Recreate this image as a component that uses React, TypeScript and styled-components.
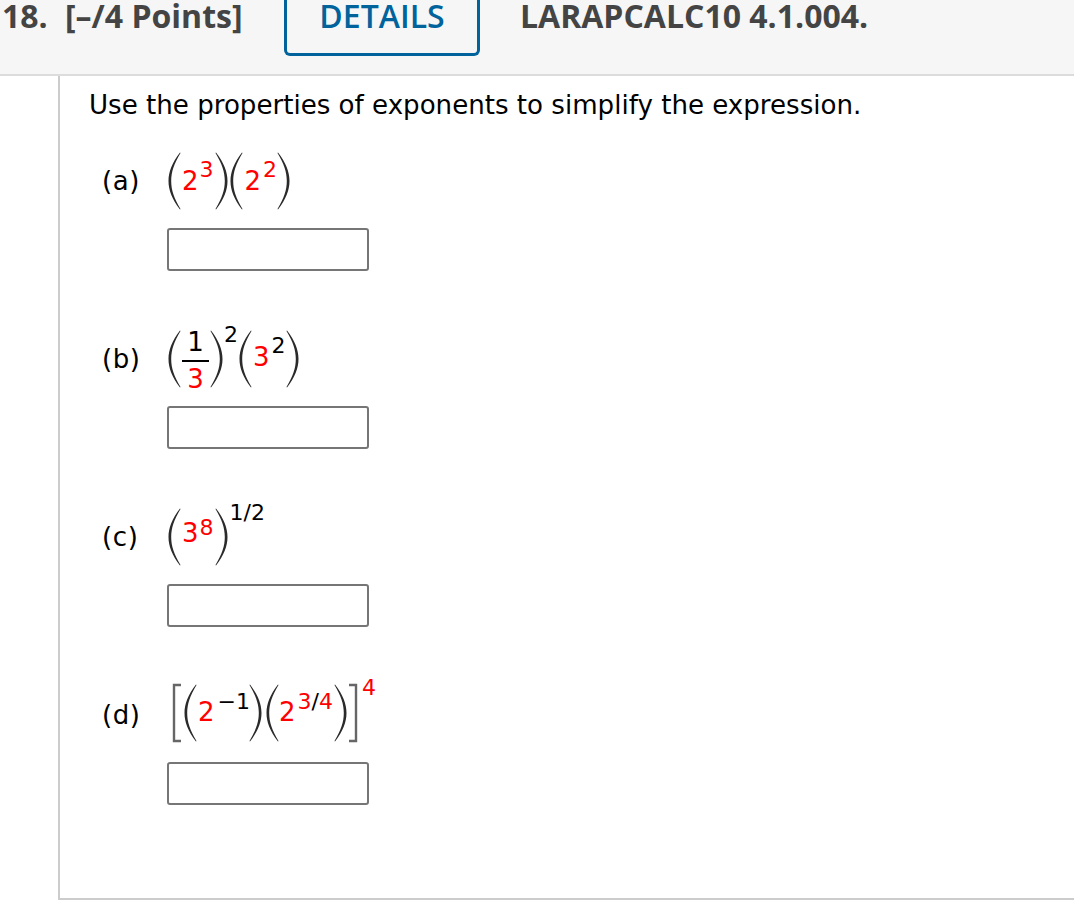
import React from "react";
import styled, { createGlobalStyle } from "styled-components";

const Global = createGlobalStyle`
  html, body { margin: 0; padding: 0; background: #fff; }
  body { width: 1074px; height: 915px; overflow: hidden; font-family: "DejaVu Sans", Verdana, sans-serif; color: #000; }
`;

const Header = styled.header`
  display: flex;
  align-items: flex-start;
  height: 74px;
  background: #f6f6f6;
  border-bottom: 2px solid #dcdcdc;
  font-family: "Open Sans", sans-serif;
  font-size: 32px;
  line-height: 32px;
  color: #444;
`;
const QNum = styled.span`
  font-weight: 700;
  margin-left: 2px;
  width: 63px;
`;
const Points = styled.span`
  font-weight: 700;
  width: 219px;
`;
const Details = styled.button`
  box-sizing: border-box;
  flex: none;
  width: 196px;
  height: 56px;
  padding: 0 0 24px;
  background: transparent;
  border: 3px solid #00639c;
  border-top: none;
  border-radius: 0 0 6px 6px;
  color: #00639c;
  font: 600 32px/32px "Open Sans", sans-serif;
`;
const Code = styled.span`
  font-weight: 700;
  margin-left: 40px;
`;

const Frame = styled.main`
  box-sizing: border-box;
  margin-left: 58px;
  height: 824px;
  border-left: 2px solid #ccc;
  border-bottom: 2px solid #ccc;
  padding: 14px 0 0 29px;
`;
const Prompt = styled.p`
  margin: 0 0 31px;
  font-size: 26.1px;
  line-height: 30px;
`;
const Part = styled.section`
  display: grid;
  grid-template-columns: 65px auto;
  grid-template-rows: 60px 43px;
  row-gap: 17px;
  margin: 0 0 58px 13px;
  justify-content: start;
  align-items: center;
`;
const Label = styled.span`
  font-size: 26px;
  line-height: 30px;
  letter-spacing: 0.6px;
`;
const Formula = styled.div<{ $raise?: number }>`
  display: flex;
  align-items: center;
  height: 60px;
  margin-left: 1px;
  margin-top: ${(p) => -(p.$raise ?? 0)}px;
  margin-bottom: ${(p) => p.$raise ?? 0}px;
  font-size: 26px;
  line-height: 30px;
`;
const Base = styled.span<{ $mt?: number; $ml?: number }>`
  color: #f00;
  margin-left: ${(p) => p.$ml ?? 1}px;
  margin-top: ${(p) => p.$mt ?? 0}px;
`;
const Sup = styled.span<{ $black?: boolean; $ml?: number; $top?: number }>`
  align-self: flex-start;
  font-size: 22px;
  line-height: 22px;
  color: ${(p) => (p.$black ? "#000" : "#f00")};
  margin-left: ${(p) => p.$ml ?? 1}px;
  margin-top: ${(p) => p.$top ?? 8}px;
  white-space: nowrap;
`;
const Slash = styled.span`
  color: #000;
`;
const Fraction = styled.span`
  display: flex;
  flex-direction: column;
  align-items: center;
  align-self: flex-start;
  width: 27px;
  margin: 0 1px 0 1px;
`;
const Num = styled.span`
  height: 30px;
  margin: -2px 0 3px;
`;
const Bar = styled.span`
  width: 27px;
  height: 2px;
  background: #000;
`;
const Den = styled.span`
  color: #f00;
  height: 30px;
  margin-top: 2px;
`;
const Answer = styled.input`
  box-sizing: border-box;
  grid-column: 2;
  width: 202px;
  height: 43px;
  margin: 0;
  background: #fff;
  border: 2px solid #767676;
  border-radius: 3px;
`;
const Glyph = styled.svg<{ $ml?: number }>`
  flex: none;
  display: block;
  margin-left: ${(p) => p.$ml ?? 0}px;
  filter: blur(0.5px);
`;

const Open = ({ ml }: { ml?: number }) => (
  <Glyph $ml={ml} width="13" height="60" viewBox="0 0 13 60" fill="#2a2a2a">
    <path d="M12 1.5 C4 12 0.5 21 0.5 30 C0.5 39 4 48 12 58.5 L12.5 58 C6 47 3.2 39 3.2 30 C3.2 21 6 13 12.5 2 Z" />
  </Glyph>
);
const Close = ({ ml }: { ml?: number }) => (
  <Glyph $ml={ml} width="13" height="60" viewBox="0 0 13 60" fill="#2a2a2a">
    <path d="M1 1.5 C9 12 12.5 21 12.5 30 C12.5 39 9 48 1 58.5 L0.5 58 C7 47 9.8 39 9.8 30 C9.8 21 7 13 0.5 2 Z" />
  </Glyph>
);
const BracketL = () => (
  <Glyph $ml={4} width="10" height="60" viewBox="0 0 10 60" fill="none" stroke="#666" strokeWidth="2.4">
    <path d="M9 2 H2 V58 H9" />
  </Glyph>
);
const BracketR = () => (
  <Glyph $ml={1} width="10" height="60" viewBox="0 0 10 60" fill="none" stroke="#666" strokeWidth="2.4">
    <path d="M1 2 H8 V58 H1" />
  </Glyph>
);

export default function App() {
  return (
    <>
      <Global />
      <Header>
        <QNum>18.</QNum>
        <Points>[–/4 Points]</Points>
        <Details>DETAILS</Details>
        <Code>LARAPCALC10 4.1.004.</Code>
      </Header>
      <Frame>
        <Prompt>Use the properties of exponents to simplify the expression.</Prompt>
        <Part>
          <Label>(a)</Label>
          <Formula>
            <Open />
            <Base>2</Base>
            <Sup>3</Sup>
            <Close ml={1} />
            <Open ml={2} />
            <Base $ml={2}>2</Base>
            <Sup $ml={2}>2</Sup>
            <Close />
          </Formula>
          <Answer />
        </Part>
        <Part>
          <Label>(b)</Label>
          <Formula>
            <Open />
            <Fraction>
              <Num>1</Num>
              <Bar />
              <Den>3</Den>
            </Fraction>
            <Close />
            <Sup $black $top={-5}>2</Sup>
            <Open ml={1} />
            <Base $mt={-4}>3</Base>
            <Sup $black $ml={2} $top={6}>2</Sup>
            <Close />
          </Formula>
          <Answer />
        </Part>
        <Part>
          <Label>(c)</Label>
          <Formula>
            <Open />
            <Base $mt={-8}>3</Base>
            <Sup $top={10}>8</Sup>
            <Close ml={1} />
            <Sup $black $ml={2} $top={-5}>1/2</Sup>
          </Formula>
          <Answer />
        </Part>
        <Part>
          <Label>(d)</Label>
          <Formula $raise={2}>
            <BracketL />
            <Open ml={2} />
            <Base $mt={-3}>2</Base>
            <Sup $black $ml={3} $top={8}>−1</Sup>
            <Close ml={-1} />
            <Open ml={4} />
            <Base $ml={0} $mt={-3}>2</Base>
            <Sup $ml={2} $top={8}>3<Slash>/</Slash>4</Sup>
            <Close ml={1} />
            <BracketR />
            <Sup $ml={4} $top={-6}>4</Sup>
          </Formula>
          <Answer />
        </Part>
      </Frame>
    </>
  );
}
